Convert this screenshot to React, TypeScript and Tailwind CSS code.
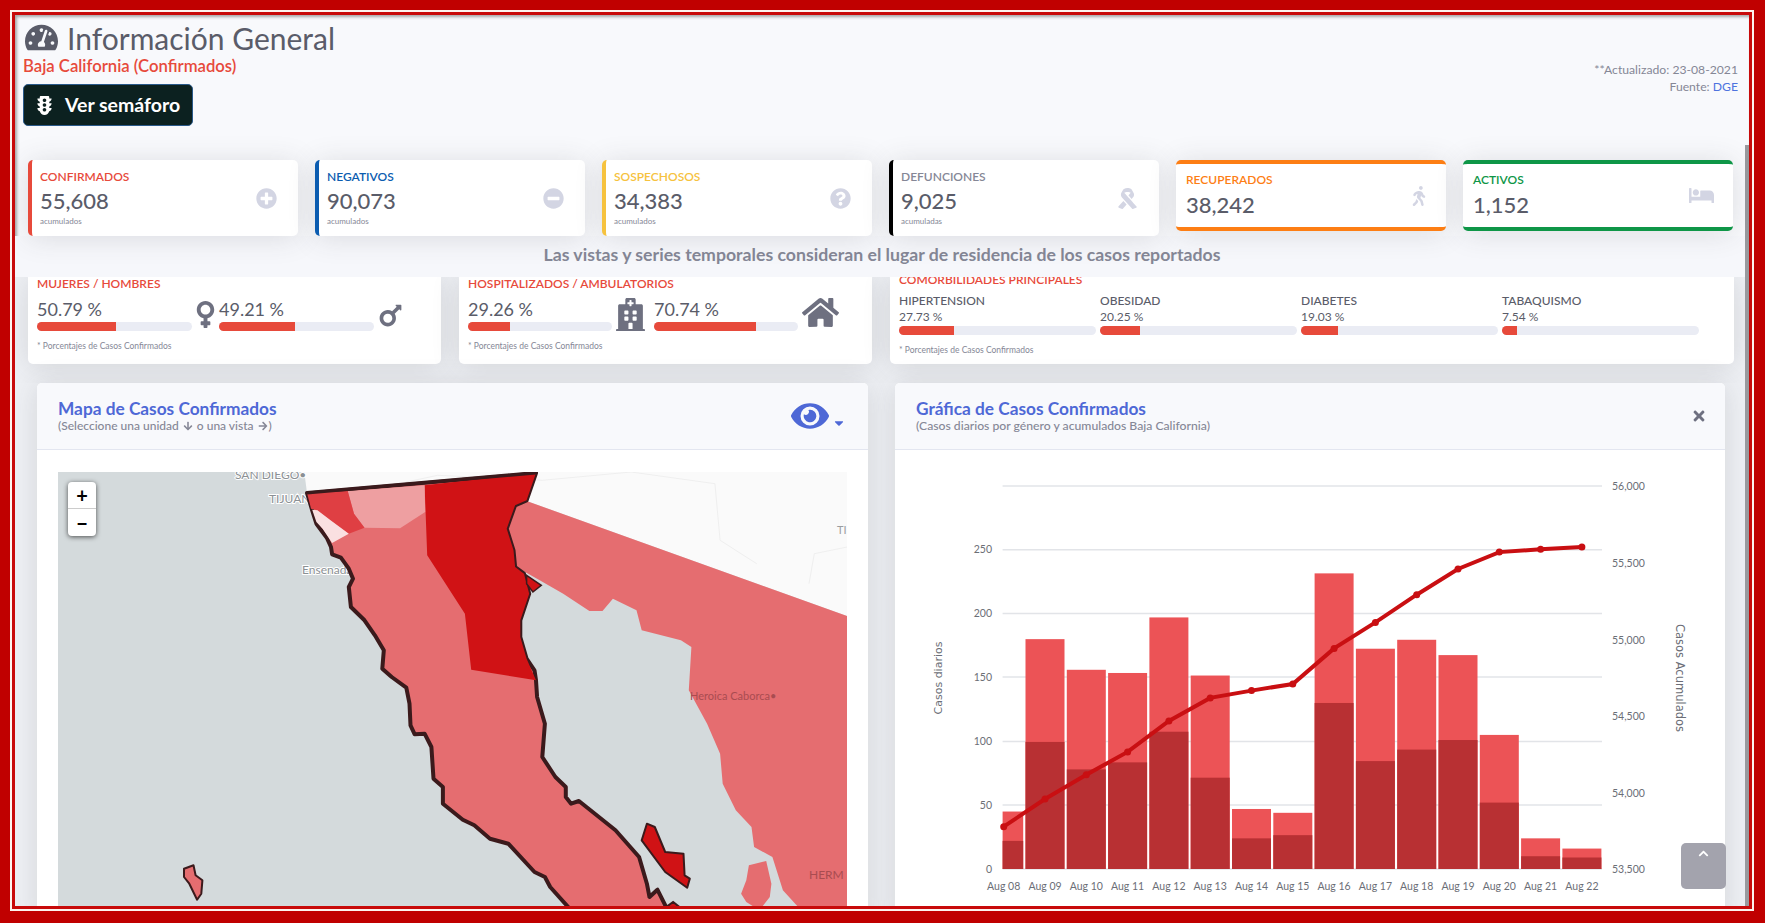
import type { IconType } from 'react-icons'
import {
  FaArrowDown,
  FaArrowRight,
  FaBed,
  FaCaretDown,
  FaChevronUp,
  FaEye,
  FaHome,
  FaHospital,
  FaMars,
  FaMinusCircle,
  FaPlusCircle,
  FaQuestionCircle,
  FaRibbon,
  FaTachometerAlt,
  FaTimes,
  FaTrafficLight,
  FaVenus,
  FaWalking,
} from 'react-icons/fa'

const stats = [
  { label: 'CONFIRMADOS', value: '55,608', note: 'acumulados', Icon: FaPlusCircle, border: 'border-l-[#e74a3b]', text: 'text-[#e74a3b]' },
  { label: 'NEGATIVOS', value: '90,073', note: 'acumulados', Icon: FaMinusCircle, border: 'border-l-[#0b5cb0]', text: 'text-[#0b5cb0]' },
  { label: 'SOSPECHOSOS', value: '34,383', note: 'acumulados', Icon: FaQuestionCircle, border: 'border-l-[#f6c23e]', text: 'text-[#f6c23e]' },
  { label: 'DEFUNCIONES', value: '9,025', note: 'acumuladas', Icon: FaRibbon, border: 'border-l-black', text: 'text-[#858796]' },
]

const comorbilidades = [
  { label: 'HIPERTENSION', pct: 27.73 },
  { label: 'OBESIDAD', pct: 20.25 },
  { label: 'DIABETES', pct: 19.03 },
  { label: 'TABAQUISMO', pct: 7.54 },
]

// Map points are read off the reference crop, then scaled to the map box
const toPoints = (flat: number[]) => {
  const out: string[] = []
  for (let i = 0; i < flat.length; i += 2) {
    out.push(`${((flat[i] - 34) / 1.912).toFixed(1)},${((flat[i + 1] - 65) / 3).toFixed(1)}`)
  }
  return out.join(' ')
}

const bcOutline = [
  510, 128, 520, 180, 528, 220, 548, 262, 556, 290, 558, 312, 575, 322, 590, 355, 598, 385, 590, 410, 594, 470, 620, 510,
  640, 555, 657, 600, 654, 655, 672, 680, 700, 712, 706, 760, 708, 825, 716, 852, 735, 850, 748, 890, 752, 985, 770, 1010,
  770, 1060, 808, 1108, 830, 1125, 860, 1165, 895, 1180, 945, 1265, 965, 1280, 975, 1310, 1015, 1380, 1200, 1380, 1180, 1318,
  1165, 1340, 1160, 1300, 1145, 1220, 1100, 1140, 1030, 1052, 1015, 1060, 1005, 1040, 1005, 1010, 985, 980, 960, 920, 965, 820,
  950, 740, 948, 690, 945, 660, 930, 625, 918, 560, 918, 510, 935, 430, 925, 370, 908, 350, 905, 300, 892, 235, 908, 165,
  930, 150, 948, 68,
]
const mexicali = [
  735, 105, 948, 68, 930, 150, 908, 165, 892, 235, 905, 300, 908, 350, 925, 370, 935, 430, 918, 510, 918, 560, 930, 625, 948,
  690, 824, 658, 812, 490, 740, 315,
]
const tecate = [588, 122, 735, 105, 736, 185, 688, 234, 620, 232, 600, 190]
const tijuana = [510, 128, 588, 122, 600, 190, 620, 232, 590, 250, 555, 210, 530, 180, 518, 175]
const rosarito = [520, 178, 530, 180, 555, 210, 590, 250, 558, 278, 540, 235, 528, 215]
const sonora = [
  930, 152, 1543, 497, 1543, 1380, 1455, 1380, 1420, 1320, 1400, 1220, 1365, 1190, 1360, 1130, 1330, 1080, 1305, 1000, 1300, 910,
  1275, 820, 1240, 720, 1245, 590, 1225, 570, 1150, 540, 1140, 480, 1095, 445, 1075, 482, 1050, 482, 1000, 430, 955, 390, 910,
  350, 905, 300, 892, 235, 908, 165,
]
const land = [505, 65, 1543, 65, 1543, 497, 930, 152, 948, 68, 510, 128]
const angelGuarda = [1160, 1120, 1175, 1130, 1195, 1205, 1230, 1210, 1232, 1275, 1242, 1285, 1237, 1312, 1195, 1265, 1150, 1170]
const guadalupe = [275, 1255, 293, 1245, 297, 1275, 310, 1290, 308, 1330, 300, 1348, 285, 1300, 275, 1280]
const tiburon = [1355, 1245, 1388, 1232, 1398, 1300, 1395, 1340, 1375, 1380, 1350, 1355, 1340, 1330, 1350, 1290]
const sanLuis = [930, 375, 958, 405, 942, 425, 930, 400]
const sanEsteban = [1195, 1372, 1210, 1355, 1224, 1372]

// Chart numbers, y positions in px inside the chart box
const days = ['Aug 08', 'Aug 09', 'Aug 10', 'Aug 11', 'Aug 12', 'Aug 13', 'Aug 14', 'Aug 15', 'Aug 16', 'Aug 17', 'Aug 18', 'Aug 19', 'Aug 20', 'Aug 21', 'Aug 22']
const totals = [45, 180, 156, 153.5, 197, 151.5, 47, 44, 231.5, 172.5, 179.5, 167.5, 105, 24, 16]
const darks = [22, 99.5, 78, 83.5, 107.5, 71.5, 24, 26.5, 130, 84.5, 93.5, 101, 52, 10, 9]
const lineY = [826.7, 799, 774.7, 751.9, 721, 697.9, 690.6, 684, 648.4, 622.4, 594.7, 569, 552.1, 549.3, 546.9]

const X0 = 108.7
const STEP = 41.3
const BASE = 419
const UNIT = 1.277
const GRID_L = 107.6
const GRID_R = 707

const PctBar = ({ pct }: { pct: number }) => (
  <div className="h-[9px] w-full overflow-hidden rounded-full bg-[#eaecf4]">
    <div className="h-full bg-[#e74a3b]" style={{ width: `${pct}%` }} />
  </div>
)

function StatCard({ label, value, note, Icon, border, text }: { label: string; value: string; note: string; Icon: IconType; border: string; text: string }) {
  return (
    <div className={`flex h-[76px] items-center justify-between rounded-[5px] border-l-4 bg-white pr-[21px] pl-2 shadow-[0_2px_28px_0_rgba(58,59,69,0.15)] ${border}`}>
      <div className="flex flex-col">
        <span className={`text-[12px] leading-[14px] font-semibold ${text}`}>{label}</span>
        <span className="mt-[4px] text-[22px] leading-[26px] font-medium text-[#5a5c69]">{value}</span>
        <span className="mt-[2px] text-[8px] leading-[10px] text-[#858796]">{note}</span>
      </div>
      <Icon className="text-[21px] text-[#d3d5e3]" />
    </div>
  )
}

function BandCard({ label, value, Icon, border, text, icon }: { label: string; value: string; Icon: IconType; border: string; text: string; icon: string }) {
  return (
    <div className={`flex h-[71px] items-center justify-between rounded-[5px] border-y-4 bg-white pl-[10px] shadow-[0_2px_28px_0_rgba(58,59,69,0.15)] ${border}`}>
      <div className="flex flex-col">
        <span className={`text-[12px] leading-[14px] font-semibold ${text}`}>{label}</span>
        <span className="mt-[5px] text-[22px] leading-[26px] font-medium text-[#5a5c69]">{value}</span>
      </div>
      <Icon className={`text-[#d3d5e3] ${icon}`} />
    </div>
  )
}

function SplitCard({ title, a, b, IconA, IconB, colWidth, iconA, iconB }: { title: string; a: number; b: number; IconA: IconType; IconB: IconType; colWidth: string; iconA: string; iconB: string }) {
  return (
    <div className="h-[87px] rounded-b-[5px] bg-white pl-[9px] shadow-[0_2px_28px_0_rgba(58,59,69,0.15)]">
      <div className="text-[12px] leading-[14px] font-semibold text-[#e74a3b]">{title}</div>
      <div className="mt-[6px] flex h-[34px] items-end">
        <div className={colWidth}>
          <div className="text-[18px] leading-[24px] text-[#5a5c69]">{a.toFixed(2)} %</div>
          <div className="mt-[1px]"><PctBar pct={a} /></div>
        </div>
        <IconA className={`shrink-0 text-[#6e7080] ${iconA}`} />
        <div className={colWidth}>
          <div className="text-[18px] leading-[24px] text-[#5a5c69]">{b.toFixed(2)} %</div>
          <div className="mt-[1px]"><PctBar pct={b} /></div>
        </div>
        <IconB className={`shrink-0 text-[#6e7080] ${iconB}`} />
      </div>
      <div className="mt-[10px] text-[8.5px] leading-[10px] text-[#858796]">* Porcentajes  de Casos Confirmados</div>
    </div>
  )
}

function MapView() {
  return (
    <div className="relative h-[460px] w-[789px] overflow-hidden bg-[#d4dadc]">
      <svg width="789" height="460" className="block font-['Lato',sans-serif]">
        <polygon points={toPoints(land)} fill="#fafafa" />
        <g fill="none" stroke="#efefef" strokeWidth="1">
          <polyline points={toPoints([1130, 65, 1290, 100, 1300, 270, 1370, 340])} />
          <polyline points={toPoints([1543, 290, 1480, 310, 1470, 400])} />
          <polyline points={toPoints([700, 95, 760, 75, 960, 90, 1130, 65])} />
        </g>
        <text x="177" y="7" fontSize="12" fill="#8b9094" stroke="#fff" strokeWidth="2" paintOrder="stroke">SAN DIEGO•</text>
        <text x="211" y="31" fontSize="12" fill="#8b9094" stroke="#fff" strokeWidth="2" paintOrder="stroke">TIJUANA</text>
        <text x="244" y="102" fontSize="12" fill="#8b9094" stroke="#fff" strokeWidth="2" paintOrder="stroke">Ensenada</text>
        <text x="779" y="62" fontSize="11" fill="#9a9da0">TI</text>

        <polygon points={toPoints(sonora)} fill="#e56d70" />
        <polygon points={toPoints(tiburon)} fill="#e56d70" />
        <polygon points={toPoints(bcOutline)} fill="#e56d70" stroke="#3b1a1c" strokeWidth="4" strokeLinejoin="round" />
        <polygon points={toPoints(mexicali)} fill="#d01215" />
        <polygon points={toPoints(tecate)} fill="#ee9fa1" />
        <polygon points={toPoints(tijuana)} fill="#df3f43" />
        <polygon points={toPoints(rosarito)} fill="#fae0e1" />
        <polyline points={toPoints([510, 128, 948, 68])} fill="none" stroke="#3b1a1c" strokeWidth="3" />
        <polygon points={toPoints(sanLuis)} fill="#d01215" stroke="#3b1a1c" strokeWidth="1.5" />
        <polygon points={toPoints(angelGuarda)} fill="#d01215" stroke="#3b1a1c" strokeWidth="2" strokeLinejoin="round" />
        <polygon points={toPoints(guadalupe)} fill="#e56d70" stroke="#3b1a1c" strokeWidth="2" strokeLinejoin="round" />
        <polygon points={toPoints(sanEsteban)} fill="#d01215" stroke="#3b1a1c" strokeWidth="2" />
        <text x="632" y="228" fontSize="11" fill="#a94c50">Heroica Caborca•</text>
        <text x="751" y="407" fontSize="12" fill="#a94c50">HERM</text>
      </svg>
      <div className="absolute top-[10px] left-[10px] flex h-[54px] w-[28px] flex-col rounded-[4px] bg-white text-black shadow-[0_1px_5px_rgba(0,0,0,0.65)]">
        <span className="flex h-[27px] items-center justify-center border-b border-[#ccc] text-[20px] leading-none font-bold">+</span>
        <span className="flex h-[27px] items-center justify-center text-[20px] leading-none font-bold">−</span>
      </div>
    </div>
  )
}

function ChartView() {
  const left = [[0, 419], [50, 355], [100, 291.5], [150, 227], [200, 163.4], [250, 99.7]]
  const right = [['56,000', 36], ['55,500', 113.5], ['55,000', 190], ['54,500', 266], ['54,000', 343], ['53,500', 419]] as const
  const line = lineY.map((y, i) => `${X0 + i * STEP},${y - 450}`).join(' ')
  return (
    <svg width="830" height="456" className="block font-['Lato',sans-serif]">
      <line x1={GRID_L} x2={GRID_R} y1={36} y2={36} stroke="#e2e4e8" strokeWidth="1.5" />
      {left.map(([v, y]) => (
        <g key={v}>
          <line x1={GRID_L} x2={GRID_R} y1={y} y2={y} stroke="#e2e4e8" strokeWidth="1.5" />
          <text x="97" y={y + 3.5} textAnchor="end" fontSize="10.5" fill="#6b6e76">{v}</text>
        </g>
      ))}
      {right.map(([label, y]) => (
        <text key={label} x="717" y={y + 3.5} fontSize="10.5" fill="#6b6e76">{label}</text>
      ))}
      {totals.map((t, i) => {
        const x = Math.max(X0 + i * STEP - 19.5, GRID_L)
        const r = X0 + i * STEP + 19.5
        return (
          <g key={i}>
            <rect x={x} y={BASE - t * UNIT} width={r - x} height={t * UNIT} fill="#ec5356" />
            <rect x={x} y={BASE - darks[i] * UNIT} width={r - x} height={darks[i] * UNIT} fill="#b83033" />
          </g>
        )
      })}
      <polyline points={line} fill="none" stroke="#c90f12" strokeWidth="4" />
      {lineY.map((y, i) => (
        <circle key={i} cx={X0 + i * STEP} cy={y - 450} r="3.5" fill="#c90f12" />
      ))}
      {days.map((d, i) => (
        <text key={d} x={X0 + i * STEP} y="440" textAnchor="middle" fontSize="10.5" fill="#6b6e76">{d}</text>
      ))}
      <text transform="translate(47,228) rotate(-90)" textAnchor="middle" fontSize="11" fill="#6b6e76" className="font-['DejaVu_Sans',sans-serif]">Casos diarios</text>
      <text transform="translate(781,228) rotate(90)" textAnchor="middle" fontSize="11.5" fill="#6b6e76" className="font-['DejaVu_Sans',sans-serif]">Casos Acumulados</text>
    </svg>
  )
}

export default function App() {
  return (
    <div className="h-[923px] w-[1765px] overflow-hidden bg-[#c00000] pt-[10px] pr-[11px] pb-[12px] pl-[10px] font-['Lato','Noto_Sans',sans-serif]">
      <div className="h-full border-2 border-[#fdf3ee]">
        <div className="h-full border-[3px] border-[#c80a0a]">
          <div className="relative h-full overflow-hidden bg-[#f8f9fc] shadow-[inset_2px_2px_3px_rgba(90,90,90,0.5)]">
            {/* Header */}
            <div className="flex h-[145px] justify-between pr-[11px] pl-[8px]">
              <div>
                <h1 className="mt-[4px] ml-[2px] flex h-[37px] items-center gap-[9px] text-[30px] leading-none font-normal text-[#5a5c69]">
                  <FaTachometerAlt className="text-[33px]" />
                  Información General
                </h1>
                <div className="text-[16.7px] leading-[20px] font-semibold text-[#e74a3b]">Baja California (Confirmados)</div>
                <button className="mt-[8px] flex h-[42px] w-[170px] items-center gap-[11px] rounded-[5px] border border-[#2a5a8a] bg-[#0c2120] pl-[11px] text-[19.5px] font-bold text-white">
                  <FaTrafficLight className="text-[19px]" />
                  Ver semáforo
                </button>
              </div>
              <div className="mt-[46px] text-right text-[12.2px] leading-[17px] text-[#858796]">
                <div>**Actualizado: 23-08-2021</div>
                <div>Fuente: <span className="text-[#4e73df]">DGE</span></div>
              </div>
            </div>

            {/* Counters */}
            <div className="relative z-10 grid grid-cols-6 items-start gap-[17px] pr-[16px] pl-[13px]">
              {stats.map((s) => (
                <StatCard key={s.label} {...s} />
              ))}
              <BandCard label="RECUPERADOS" value="38,242" Icon={FaWalking} border="border-y-[#fd7e14]" text="text-[#fd7e14]" icon="mr-[17px] text-[20px]" />
              <BandCard label="ACTIVOS" value="1,152" Icon={FaBed} border="border-y-[#0e9647]" text="text-[#0e9647]" icon="mr-[19px] text-[25px]" />
            </div>

            <div className="flex h-[41px] items-center justify-center bg-[#f6f7fb] pb-[2px] text-[17.7px] font-bold text-[#858796]">
              Las vistas y series temporales consideran el lugar de residencia de los casos reportados
            </div>

            {/* Percent rows, the top is cut off by the band */}
            <div className="h-[106px] overflow-hidden bg-[#eef0f4]">
              <div className="grid grid-cols-[413px_413px_844px] gap-x-[18px] pr-[16px] pl-[13px]">
                <SplitCard title="MUJERES / HOMBRES" a={50.79} b={49.21} IconA={FaVenus} IconB={FaMars} colWidth="w-[155px] shrink-0" iconA="-mx-[2px] mb-[1px] text-[31px]" iconB="mb-[1px] ml-[2px] text-[29px]" />
                <SplitCard title="HOSPITALIZADOS / AMBULATORIOS" a={29.26} b={70.74} IconA={FaHospital} IconB={FaHome} colWidth="w-[144px] shrink-0" iconA="mr-[7px] ml-[2px] text-[33px]" iconB="ml-[4px] text-[37px]" />
                <div className="h-[87px] rounded-b-[5px] bg-white pl-[9px] shadow-[0_2px_28px_0_rgba(58,59,69,0.15)]">
                  <div className="-mt-[4px] text-[12px] leading-[14px] font-semibold text-[#e74a3b]">COMORBILIDADES PRINCIPALES</div>
                  <div className="mt-[7px] grid w-[800px] grid-cols-4 gap-x-[4px]">
                    {comorbilidades.map((c) => (
                      <div key={c.label}>
                        <div className="text-[12px] leading-[14px] font-medium text-[#5a5c69]">{c.label}</div>
                        <div className="mt-[2px] text-[12px] leading-[14px] text-[#5a5c69]">{c.pct.toFixed(2)} %</div>
                        <div className="mt-[2px]"><PctBar pct={c.pct} /></div>
                      </div>
                    ))}
                  </div>
                  <div className="mt-[10px] text-[8.5px] leading-[10px] text-[#858796]">* Porcentajes  de Casos Confirmados</div>
                </div>
              </div>
            </div>

            {/* Map and chart */}
            <div className="flex h-[540px] gap-[27px] bg-[#eef0f4] pl-[22px]">
              <section className="h-full w-[831px] shrink-0 rounded-t-[5px] bg-white shadow-[0_2px_28px_0_rgba(58,59,69,0.15)]">
                <div className="flex h-[67px] items-center justify-between rounded-t-[5px] border-b border-[#e3e6f0] bg-[#f8f9fc] pr-[22px] pb-[1px] pl-[21px]">
                  <div>
                    <div className="text-[17.3px] leading-[20px] font-bold text-[#4e68d6]">Mapa de Casos Confirmados</div>
                    <div className="flex items-center gap-[4px] text-[12px] leading-[13px] font-medium text-[#858796]">
                      (Seleccione una unidad <FaArrowDown className="text-[10px]" /> o una vista <FaArrowRight className="-mr-[3px] text-[10px]" />)
                    </div>
                  </div>
                  <div className="flex items-end gap-[3px] text-[#4e68d6]">
                    <FaEye className="text-[38px]" />
                    <FaCaretDown className="mb-[5px] text-[14px]" />
                  </div>
                </div>
                <div className="pt-[22px] pl-[21px]">
                  <MapView />
                </div>
              </section>
              <section className="h-full w-[830px] shrink-0 rounded-t-[5px] bg-white shadow-[0_2px_28px_0_rgba(58,59,69,0.15)]">
                <div className="flex h-[67px] items-center justify-between rounded-t-[5px] border-b border-[#e3e6f0] bg-[#f8f9fc] pr-[18px] pb-[1px] pl-[21px]">
                  <div>
                    <div className="text-[17.3px] leading-[20px] font-bold text-[#4e68d6]">Gráfica de Casos Confirmados</div>
                    <div className="text-[12.2px] leading-[13px] font-medium text-[#858796]">(Casos diarios por género y acumulados Baja California)</div>
                  </div>
                  <FaTimes className="text-[16px] text-[#6e7080]" />
                </div>
                <ChartView />
              </section>
            </div>

            {/* Scroll to top, scrollbar */}
            <button className="absolute top-[828px] left-[1666px] flex h-[46px] w-[45px] justify-center rounded-[5px] bg-[#a3a3ad] pt-[5px] text-white">
              <FaChevronUp className="text-[11px]" />
            </button>
            <div className="absolute top-[130px] right-0 bottom-0 w-[4px] bg-[#9a9a9e]" />
          </div>
        </div>
      </div>
    </div>
  )
}
